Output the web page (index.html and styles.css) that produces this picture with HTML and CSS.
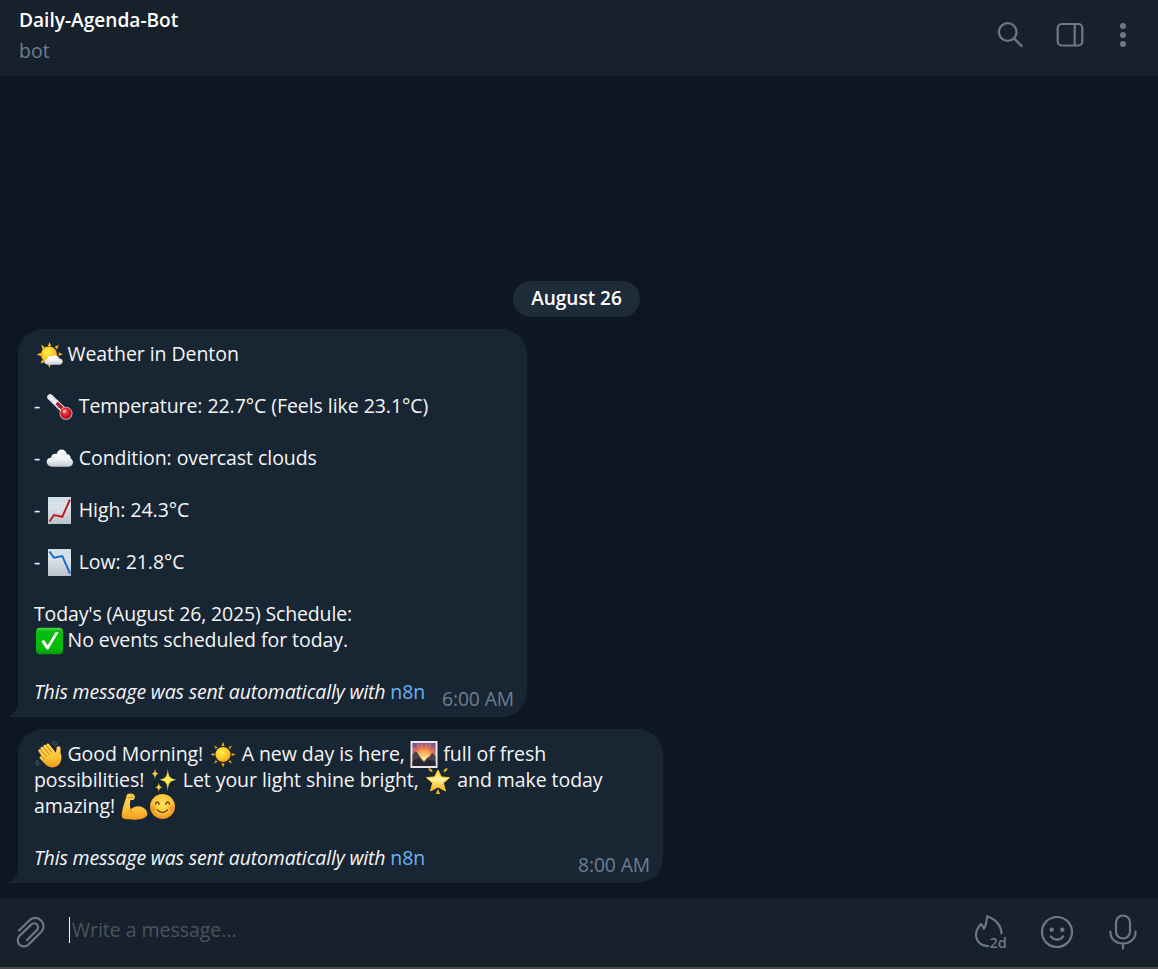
FILE: index.html
```html
<!DOCTYPE html>
<html lang="en">
<head>
<meta charset="utf-8">
<title>Daily-Agenda-Bot</title>
<link rel="stylesheet" href="styles.css">
</head>
<body>
<svg class="defs" aria-hidden="true">
  <defs>
    <radialGradient id="gold" cx=".4" cy=".35" r=".7"><stop offset="0" stop-color="#fff04a"/><stop offset=".6" stop-color="#ffc728"/><stop offset="1" stop-color="#f59a12"/></radialGradient>
    <linearGradient id="white" x1="0" y1="0" x2="0" y2="1"><stop offset="0" stop-color="#fff"/><stop offset=".6" stop-color="#f0f1f5"/><stop offset="1" stop-color="#c4c8d0"/></linearGradient>
    <linearGradient id="paper" x1="0" y1="0" x2="0" y2="1"><stop offset="0" stop-color="#d3e0ea"/><stop offset=".4" stop-color="#dde5ec"/><stop offset="1" stop-color="#bac2ca"/></linearGradient>
    <linearGradient id="green" x1="0" y1="0" x2="0" y2="1"><stop offset="0" stop-color="#4fd84c"/><stop offset=".15" stop-color="#08bd0e"/><stop offset=".8" stop-color="#02b808"/><stop offset="1" stop-color="#049a08"/></linearGradient>
    <linearGradient id="skin" x1="0" y1="0" x2="0" y2="1"><stop offset="0" stop-color="#ffd95c"/><stop offset=".6" stop-color="#fdc23a"/><stop offset="1" stop-color="#ee9a1e"/></linearGradient>
    <radialGradient id="face" cx=".5" cy=".4" r=".6"><stop offset="0" stop-color="#ffe65a"/><stop offset=".6" stop-color="#ffc63a"/><stop offset="1" stop-color="#f08a1c"/></radialGradient>
    <radialGradient id="bulb" cx=".4" cy=".35" r=".65"><stop offset="0" stop-color="#ff7a80"/><stop offset=".5" stop-color="#dc1c2c"/><stop offset="1" stop-color="#a90e1d"/></radialGradient>
    <radialGradient id="dusk" cx=".5" cy=".68" r=".75"><stop offset="0" stop-color="#fff0a0"/><stop offset=".3" stop-color="#ffc56b"/><stop offset=".6" stop-color="#e8764e"/><stop offset="1" stop-color="#76509c"/></radialGradient>
    <linearGradient id="starfill" x1="0" y1="0" x2="0" y2="1"><stop offset="0" stop-color="#ffd52e"/><stop offset=".45" stop-color="#fff59a"/><stop offset="1" stop-color="#f6a814"/></linearGradient>
    <linearGradient id="sparkfill" x1="0" y1="0" x2="0" y2="1"><stop offset="0" stop-color="#f7b52a"/><stop offset=".5" stop-color="#ffee5c"/><stop offset="1" stop-color="#f7b52a"/></linearGradient>
  </defs>
  <symbol id="sun-cloud" viewBox="0 0 28 28">
    <path fill="#f5b324" d="M14.5 1l1.8 4.200h-3.600zM6 3.800l4 2.200-2.500 2.600zM23.600 3.800l-4 2.200 2.500 2.600zM1.800 13.600l4.300-1.800v3.500zM28 13.200l-4.300-1.600v3.400zM5.400 22.600l2-4 2.600 2.400zM14.400 27l-1.700-4.300h3.400z"/>
    <circle cx="14" cy="13.500" r="8" fill="url(#gold)"/>
    <path d="M13.200 23.800c-5 0-5-5.400-.9-5.600.2-3 3.200-4.200 5.200-2.600 2-2.600 6.400-1.300 6.500 2 4.700-.1 5 6.200.3 6.200z" fill="url(#white)"/>
  </symbol>
  <symbol id="thermometer" viewBox="0 0 28 28">
    <path d="M4.200 4.200L17.500 17" stroke="#e3e7ee" stroke-width="6" stroke-linecap="round"/>
    <path d="M5.700 9l2.300-2.300M9 12.200l2.300-2.300M12.200 15.200l2-2" stroke="#9299aa" stroke-width="1"/>
    <path d="M4 4.200L12 12" stroke="#fff" stroke-width="2" stroke-linecap="round" opacity=".8"/>
    <path d="M11.800 11L19 18" stroke="#b91a28" stroke-width="3.600" stroke-linecap="round"/>
    <circle cx="20" cy="20.300" r="6.500" fill="#c9bcc2"/>
    <circle cx="20" cy="20.200" r="5.700" fill="url(#bulb)"/>
    <ellipse cx="18.500" cy="18.300" rx="1.800" ry="1.200" fill="#ffb9bd" transform="rotate(-35 18.500 18.300)"/>
  </symbol>
  <symbol id="cloud" viewBox="0 0 28 28">
    <path d="M7 21.700c-8 0-8-9.200-1.800-9.300.2-3 3.200-4.200 5.300-3.200C11.600 3.200 19.500 2.800 20.800 9.200c3 .1 4 1.900 3.900 4.200 4 2.200 2.600 8.300-2.900 8.300z" fill="url(#white)"/>
    <path d="M5.200 12.600c2-.6 3.600.2 4.400 1.600M20.600 9.400c-2-.5-3.600.2-4.600 1.800" fill="none" stroke="#cfd3da" stroke-width=".7"/>
  </symbol>
  <symbol id="chart-up" viewBox="0 0 28 28">
    <rect x="2" y="0" width="23" height="27" fill="url(#paper)"/>
    <path d="M6 0v27M10 0v27M14 0v27M18 0v27M22 0v27M2 4h23M2 8h23M2 12h23M2 16h23M2 20h23M2 24h23" stroke="#c3cfda" stroke-width=".3"/>
    <path d="M3.500 24.500L8 18l8.300 1.800L24 2.500" fill="none" stroke="#c4161d" stroke-width="1.900"/>
  </symbol>
  <symbol id="chart-down" viewBox="0 0 28 28">
    <rect x="2" y="0" width="23" height="27" fill="url(#paper)"/>
    <path d="M6 0v27M10 0v27M14 0v27M18 0v27M22 0v27M2 4h23M2 8h23M2 12h23M2 16h23M2 20h23M2 24h23" stroke="#c3cfda" stroke-width=".3"/>
    <path d="M3.500 2.500L8 8.800l8.300-1.700L24 24.500" fill="none" stroke="#1766c4" stroke-width="1.900"/>
  </symbol>
  <symbol id="check" viewBox="0 0 28 28">
    <rect x="1" y=".7" width="27" height="26.500" rx="4" fill="url(#green)"/>
    <path d="M6.200 14.500l2.800-1.700 3.600 5.400L20.500 5.300h3.200L13.300 22.500h-1.500z" fill="#fff"/>
  </symbol>
  <symbol id="wave" viewBox="0 0 28 28">
    <path d="M3.800 10.800c-1.400-2 .7-3.500 2.200-2-1.800-2.400.8-4.200 2.500-2.400-1-2.400 1.500-3.500 3-1.800-.6-2 1.500-3 2.900-1.200l6.300 8c1-1.500.6-3 .9-4.600.4-2.600 4-2 4 .7l-.2 4c1.600 3.700 1.600 8.500-1.300 11.700-3.500 4-9.200 4.200-13 .8L5.200 18c-1.600-1.700.2-3.400 1.800-2.300z" fill="url(#skin)"/>
    <path d="M5.800 8.800l6 7M8.500 6.400l6 7.200M11.500 4.600l5.800 7.200M7 15.700l3 3" fill="none" stroke="#c98012" stroke-width="1"/>
    <path d="M16.500 1.500c2 .7 3.300 2 4 4M18.500.3c2 .8 3 2 3.700 3.700M2.200 19c.3 2 1.300 3.500 3.300 4.500M.7 20.500c.3 2 1.300 3.800 3 4.600" fill="none" stroke="#59656f" stroke-width="1"/>
  </symbol>
  <symbol id="sun" viewBox="0 0 28 28">
    <path fill="#eaa51c" d="M14 .7l1.600 4.300h-3.200zM5 4.500l3.600 1.700-1.900 1.900zM23 4.500l-3.600 1.700 1.900 1.900zM1.300 13.500l4.100-1.600v3.200zM26.700 13.500l-4.100-1.600v3.200zM5 22.500l3.600-1.700-1.900-1.900zM23 22.500l-3.600-1.700 1.900-1.900zM14 26.500l1.600-4.300h-3.200z"/>
    <circle cx="14" cy="13.500" r="7.600" fill="url(#gold)"/>
  </symbol>
  <symbol id="sunrise" viewBox="0 0 28 28">
    <rect x=".5" y="0" width="27" height="27" fill="#e9e8ec"/>
    <rect x="2.500" y="2" width="23" height="23" fill="url(#dusk)"/>
    <path d="M14 16L7 2.500M14 16l-3-13.500M14 16l3-13.500M14 16l7-13.500M14 16L3 7M14 16L25 7" stroke="#ffb45e" stroke-width=".7" opacity=".5"/>
    <path d="M2.500 25V13.500L5 10.500l1.700.5 2 3 3 4 2.300 2.500 3-3.500 2.500-1.500 2.500-3.500 1.500 1 2 2.500V25z" fill="#48404b"/>
    <path d="M2.500 25v-5l6-3 5.500 5.500 5-4 6.500 2V25z" fill="#292632"/>
  </symbol>
  <symbol id="sparkles" viewBox="0 0 28 28">
    <g fill="url(#sparkfill)">
      <path d="M17.800 1.500c.7 7.500 1.500 10.200 8.700 11.300-7.200 1.100-8 3.800-8.700 11.400-.7-7.600-1.500-10.300-8.500-11.400 7-1.100 7.800-3.800 8.500-11.300z"/>
      <path d="M5 1.500c.5 3.500 1 4.600 4 5.200-3 .6-3.500 1.700-4 5.500-.5-3.800-1-4.900-3.700-5.500C4 6.100 4.500 5 5 1.500zM8.800 15.500c.5 3 1 4.100 3.900 4.700-2.900.6-3.400 1.600-3.900 5-.5-3.400-1-4.400-3.700-5 2.700-.6 3.200-1.700 3.700-4.700z"/>
    </g>
  </symbol>
  <symbol id="glow-star" viewBox="0 0 28 28">
    <path d="M14 3l3.400 6.900 8.100.7-6.100 5.400 2 7.900-7.400-4-7.400 4 2-7.900-6.100-5.400 8.100-.7z" fill="url(#starfill)" stroke="#fbc92c" stroke-width="1" stroke-linejoin="round"/>
    <path d="M4.300 1.300c2.700-.3 4.200 1.500 4.300 4-2.500-.3-4-1.800-4.300-4zM23.700 1.300c-2.700-.3-4.200 1.500-4.300 4 2.500-.3 4-1.800 4.300-4zM14 22l2.300 5h-4.600z" fill="#e6b024"/>
  </symbol>
  <symbol id="muscle" viewBox="0 0 28 28">
    <path d="M5.800 1.800C7.500 0 11 .2 12.800 1.500c1.800 1.600 1.200 4-.1 5.200-1 .9-2.200 0-3.200.3-.7 3.500-.9 6.500.3 9.300 4-4 11.500-4.700 15.300.9 1.500 2.200 1.600 4.200.8 5.500-4 5-15.500 4.300-21.800 3.400C.7 25.500.4 23 1 19.500 1.800 13.500 4.300 8.500 5.800 1.800z" fill="url(#skin)"/>
    <path d="M5.700 3.800c1.500 1.400 3 1.400 4.300.4M9.800 16.300c-.4 1.300-.3 2.300.2 3.200M9.700 1.500c1.500.8 2 2.300 1.300 4" fill="none" stroke="#ce8013" stroke-width=".9"/>
  </symbol>
  <symbol id="smile" viewBox="0 0 28 28">
    <circle cx="13.500" cy="13.500" r="12.500" fill="url(#face)"/>
    <path d="M6.500 11.200c.7-3 3-3 3.700 0M16.800 11.200c.7-3 3-3 3.700 0M8.500 16.800c2.600 3.600 7.400 3.600 10 0" fill="none" stroke="#70411b" stroke-width="1.400" stroke-linecap="round"/>
    <circle cx="4.500" cy="15.500" r="2.800" fill="#ff6838" opacity=".4"/><circle cx="22.500" cy="15.500" r="2.800" fill="#ff6838" opacity=".4"/>
  </symbol>
</svg>
<div class="app">
  <header class="topbar">
    <div class="peer">
      <h1 class="peer-name">Daily-Agenda-Bot</h1>
      <div class="peer-status">bot</div>
    </div>
    <div class="actions">
      <svg class="icon" width="26" height="26" viewBox="0 0 26 26"><circle cx="9.700" cy="10" r="8.800"/><path d="M16 16.400l7.500 7.500" stroke-width="2.400"/></svg>
      <svg class="icon panel" width="28" height="26" viewBox="0 0 28 26"><rect x="1.700" y="2" width="24.600" height="21.500" rx="4"/><path d="M18.700 2v21.500"/></svg>
      <svg class="icon dots" width="8" height="26" viewBox="0 0 8 26"><circle cx="4" cy="4" r="3"/><circle cx="4" cy="13" r="3"/><circle cx="4" cy="22" r="3"/></svg>
    </div>
  </header>
  <main class="history">
    <div class="date">August 26</div>
    <article class="bubble weather">
      <svg class="tail" viewBox="0 0 10 26"><path d="M10 0v26H0c0-1 0-1 .8-1.500C6 22 9 18 9 10V0z"/></svg>
      <p><svg class="emoji"><use href="#sun-cloud"/></svg> Weather in Denton</p>
      <p>- <svg class="emoji"><use href="#thermometer"/></svg> Temperature: 22.7°C (Feels like 23.1°C)</p>
      <p>- <svg class="emoji"><use href="#cloud"/></svg> Condition: overcast clouds</p>
      <p>- <svg class="emoji"><use href="#chart-up"/></svg> High: 24.3°C</p>
      <p>- <svg class="emoji"><use href="#chart-down"/></svg> Low: 21.8°C</p>
      <p><span class="tight">Today's (August 26, 2025) Schedule:</span><br><svg class="emoji"><use href="#check"/></svg> No events scheduled for today.</p>
      <p class="tight"><em>This message was sent automatically with</em> <a>n8n</a></p>
      <time>6:00 AM</time>
    </article>
    <article class="bubble morning">
      <svg class="tail" viewBox="0 0 10 26"><path d="M10 0v26H0c0-1 0-1 .8-1.500C6 22 9 18 9 10V0z"/></svg>
      <p><svg class="emoji"><use href="#wave"/></svg> Good Morning! <svg class="emoji"><use href="#sun"/></svg> A new day is here, <svg class="emoji"><use href="#sunrise"/></svg> full of fresh<br>possibilities! <svg class="emoji"><use href="#sparkles"/></svg> Let your light shine bright, <svg class="emoji"><use href="#glow-star"/></svg> and make today<br>amazing! <svg class="emoji"><use href="#muscle"/></svg><svg class="emoji"><use href="#smile"/></svg></p>
      <p class="tight"><em>This message was sent automatically with</em> <a>n8n</a></p>
      <time>8:00 AM</time>
    </article>
  </main>
  <footer class="composer">
    <svg class="icon clip" width="30" height="34" viewBox="0 0 30 34"><path d="M3 14.500L13.500 4.200C16.500 1.200 21.500 1 25 4.500c3.500 3.500 3.200 8.300.3 11.200L12.500 28.500c-2.600 2.600-6.600 2.500-9 .1s-2.400-6.300.1-8.800L15.200 8.600c1.800-1.700 4.300-1.600 5.800-.1s1.500 4-.2 5.700L10.800 24.200"/></svg>
    <div class="field"><span class="caret"></span>Write a message...</div>
    <div class="tools">
      <svg class="icon timer" width="34" height="36" viewBox="0 0 34 36"><path d="M14.300 32C7.500 32.500 2 27.500 2 20.500c0-4.300 2-7 4.800-10.600 1.600 1.200 2.500 2.800 3 4.700C12.300 11 12.800 7 13 2.200 21 4.500 27.500 11.500 27.500 19.500"/><text x="15.500" y="33.500">2d</text></svg>
      <svg class="icon face" width="34" height="34" viewBox="0 0 34 34"><circle cx="17" cy="17" r="15"/><circle class="eye" cx="11.700" cy="14.700" r="2.200"/><circle class="eye" cx="22.300" cy="14.700" r="2.200"/><path d="M10.800 21.300c2.900 4.300 9.500 4.300 12.400 0"/></svg>
      <svg class="icon" width="28" height="36" viewBox="0 0 28 36"><rect x="7" y="1.500" width="14" height="23" rx="7"/><path d="M1.500 17.500v1.300c0 6.200 5.500 10.700 12.500 10.700s12.500-4.500 12.500-10.700v-1.300M14 29.500V34.500"/></svg>
    </div>
  </footer>
</div>
</body>
</html>
```
FILE: styles.css
```css
* { box-sizing: border-box; }
body {
  margin: 0;
  background: #0e1621;
  color: #f5f5f5;
  font: 19px/26px "Open Sans", "Noto Sans", sans-serif;
}
.defs { position: absolute; width: 0; height: 0; }
.app { height: 969px; display: flex; flex-direction: column; overflow: hidden; }
.topbar {
  flex: none;
  height: 77px;
  padding: 7px 31px 0 19px;
  display: flex;
  justify-content: space-between;
  background: #17212b;
  border-bottom: 1px solid #101923;
}
.peer-name { margin: 0; font-size: 19.1px; line-height: 26px; font-weight: 600; color: #fff; }
.peer-status { margin-top: 5px; font-size: 19.5px; color: #6d7f8f; }
.actions { display: flex; gap: 32px; padding-top: 15px; }
.panel { margin-right: 3px; }
.icon { display: block; flex: none; fill: none; stroke: #6c7883; stroke-width: 2.2; stroke-linecap: round; stroke-linejoin: round; overflow: visible; }
.dots, .eye { fill: #6c7883; stroke: none; }
.history { flex: 1; min-height: 0; padding: 204px 18px 0; display: flex; flex-direction: column; align-items: flex-start; }
.date {
  align-self: flex-start;
  margin: 0 0 12px 495px;
  width: 127px;
  height: 36px;
  line-height: 34px;
  border-radius: 18px;
  background: #1e2c3a;
  color: #fff;
  font-weight: 600;
  text-align: center;
}
.bubble {
  position: relative;
  padding: 12px 16px;
  background: #182533;
  border-radius: 25px 25px 25px 0;
  font-size: 19.5px;
  letter-spacing: -.06px;
  white-space: nowrap;
}
.weather { width: 509px; height: 388px; margin-bottom: 12px; }
.morning { width: 645px; height: 154px; }
.bubble p { margin: 0 0 26px; }
.bubble .tight { letter-spacing: -.15px; }
.bubble a { color: #6ab3f3; }
.bubble time { position: absolute; right: 13px; bottom: 5px; font-size: 19.3px; letter-spacing: -.1px; color: #6d7f8f; }
.emoji { width: 28px; height: 28px; margin: 0 0 -2px .5px; vertical-align: top; }
.tail { position: absolute; left: -9px; bottom: 0; width: 10px; height: 26px; fill: #182533; }
.composer {
  flex: none;
  height: 72px;
  padding: 0 21px 0 16px;
  display: flex;
  align-items: center;
  background: #17212b;
  border-top: 1px solid #0b131c;
  border-bottom: 2px solid #494548;
}
.clip { margin-top: 1px; }
.field { flex: 1; margin-left: 23px; padding-bottom: 6px; display: flex; align-items: center; font-size: 19.5px; letter-spacing: -.03px; color: #49545f; }
.caret { width: 1px; height: 26px; margin-right: 2px; background: #f5f5f5; }
.tools { display: flex; align-items: center; gap: 32px; padding-bottom: 2px; }
.face { margin-right: 3px; }
.timer text { fill: #6c7883; stroke: none; font: 600 14.500px "Open Sans", sans-serif; }
```
